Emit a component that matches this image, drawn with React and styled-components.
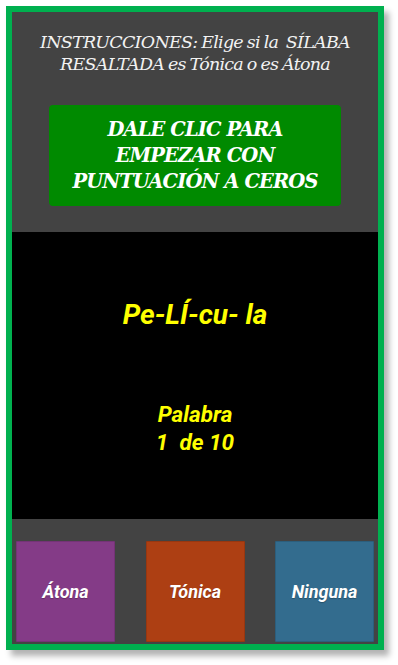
import React from "react";
import styled, { createGlobalStyle } from "styled-components";

const Global = createGlobalStyle`
  html, body { margin: 0; padding: 0; background: #ffffff; }
  #root { width: 398px; height: 665px; }
`;

const Page = styled.div`
  padding: 6px 0 0 6px;
  width: 398px;
  height: 665px;
  box-sizing: border-box;
`;

const Frame = styled.div`
  width: 378px;
  height: 644px;
  box-sizing: border-box;
  border: 6px solid #00b04f;
  box-shadow: 5px 6px 6px rgba(0, 0, 0, 0.3);
  display: flex;
  flex-direction: column;
  background: #434343;
`;

const Header = styled.section`
  height: 220px;
  flex: none;
  background: #434343;
  display: flex;
  flex-direction: column;
  align-items: center;
  padding-top: 19px;
  box-sizing: border-box;
`;

const Instructions = styled.p`
  margin: 0;
  font-family: "DejaVu Serif", "Liberation Serif", serif;
  font-style: italic;
  font-size: 17.5px;
  letter-spacing: -0.75px;
  word-spacing: -1px;
  line-height: 22px;
  color: #f2f2f2;
  text-align: center;
  white-space: pre;
`;

const StartButton = styled.button`
  margin-top: 30px;
  width: 292px;
  height: 101px;
  border: none;
  border-radius: 4px;
  background: #008a00;
  color: #ffffff;
  font-family: "DejaVu Serif", "Liberation Serif", serif;
  font-style: italic;
  font-weight: bold;
  font-size: 19.5px;
  letter-spacing: -0.9px;
  line-height: 26px;
  text-align: center;
  padding: 0 8px;
  cursor: pointer;
`;

const Stage = styled.section`
  height: 287px;
  flex: none;
  background: #000000;
  display: flex;
  flex-direction: column;
  align-items: center;
  font-family: Roboto, "Liberation Sans", sans-serif;
  font-style: italic;
  font-weight: bold;
  color: #ffff00;
  text-align: center;
`;

const Word = styled.div`
  margin-top: 64px;
  font-size: 28px;
  line-height: 38px;
`;

const Counter = styled.div`
  margin-top: 66px;
  font-size: 22.5px;
  line-height: 28px;
  white-space: pre;
`;

const Answers = styled.section`
  flex: 1;
  display: flex;
  justify-content: space-between;
  padding: 22px 4px 0;
  box-sizing: border-box;
`;

const Answer = styled.button`
  width: 99px;
  height: 101px;
  border: 1px solid rgba(0, 0, 0, 0.12);
  border-radius: 1px;
  background: ${(p) => p.$bg};
  color: #ffffff;
  font-family: Roboto, "Liberation Sans", sans-serif;
  font-style: italic;
  font-weight: bold;
  font-size: 18px;
  text-shadow: 0 1px 1px rgba(0, 0, 0, 0.25);
  padding: 0;
  cursor: pointer;
`;

export default function App() {
  return (
    <>
      <Global />
      <Page>
        <Frame>
          <Header>
            <Instructions>
              {"INSTRUCCIONES: Elige si la  SÍLABA\nRESALTADA es Tónica o es Átona"}
            </Instructions>
            <StartButton>
              DALE CLIC PARA
              <br />
              EMPEZAR CON
              <br />
              PUNTUACIÓN A CEROS
            </StartButton>
          </Header>
          <Stage>
            <Word>Pe-LÍ-cu- la</Word>
            <Counter>{"Palabra\n1  de 10"}</Counter>
          </Stage>
          <Answers>
            <Answer $bg="#843b87">Átona</Answer>
            <Answer $bg="#ad3f13">Tónica</Answer>
            <Answer $bg="#336c8e">Ninguna</Answer>
          </Answers>
        </Frame>
      </Page>
    </>
  );
}
